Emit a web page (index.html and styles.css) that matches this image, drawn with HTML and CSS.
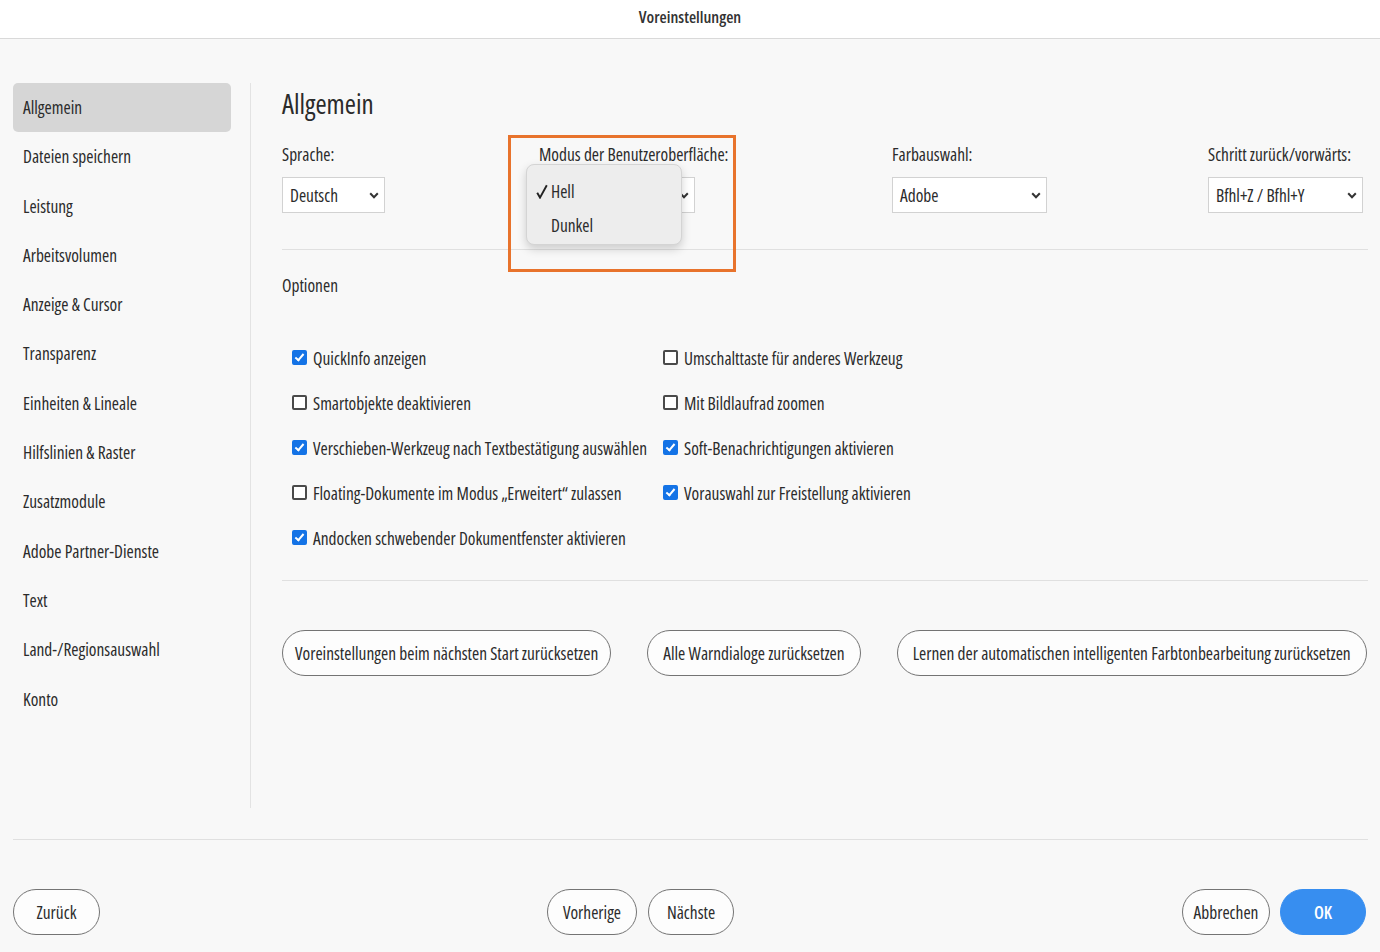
FILE: index.html
```html
<!DOCTYPE html>
<html lang="de">
<head>
  <meta charset="UTF-8">
  <meta name="viewport" content="width=device-width, initial-scale=1.0">
  <title>Voreinstellungen</title>
  <link rel="stylesheet" href="styles.css">
</head>
<body>
  <div class="titlebar">Voreinstellungen</div>

  <div class="layout">
    <!-- Seitenleiste -->
    <nav class="sidebar">
      <div class="nav-item active">Allgemein</div>
      <div class="nav-item">Dateien speichern</div>
      <div class="nav-item">Leistung</div>
      <div class="nav-item">Arbeitsvolumen</div>
      <div class="nav-item">Anzeige &amp; Cursor</div>
      <div class="nav-item">Transparenz</div>
      <div class="nav-item">Einheiten &amp; Lineale</div>
      <div class="nav-item">Hilfslinien &amp; Raster</div>
      <div class="nav-item">Zusatzmodule</div>
      <div class="nav-item">Adobe Partner-Dienste</div>
      <div class="nav-item">Text</div>
      <div class="nav-item">Land-/Regionsauswahl</div>
      <div class="nav-item">Konto</div>
    </nav>

    <!-- Inhalt -->
    <main class="content">
      <h1>Allgemein</h1>

      <div class="fields">
        <div class="field">
          <label>Sprache:</label>
          <div class="select w-small">
            <span>Deutsch</span>
            <svg class="chev" width="10" height="7" viewBox="0 0 10 7"><path d="M1.2 1.2L5 5.2l3.8-4" fill="none" stroke="#333" stroke-width="2"/></svg>
          </div>
        </div>
        <div class="field mode">
          <label>Modus der Benutzeroberfläche:</label>
          <div class="select w-mid">
            <span></span>
            <svg class="chev" width="10" height="7" viewBox="0 0 10 7"><path d="M1.2 1.2L5 5.2l3.8-4" fill="none" stroke="#333" stroke-width="2"/></svg>
          </div>
          <div class="popup">
            <div class="popup-item">
              <svg class="tick" width="12" height="15" viewBox="0 0 12 15"><path d="M1.2 8.8L4 13.6L10.8 1.2" fill="none" stroke="#222" stroke-width="1.9"/></svg>
              Hell
            </div>
            <div class="popup-item">Dunkel</div>
          </div>
          <div class="highlight"></div>
        </div>
        <div class="field">
          <label>Farbauswahl:</label>
          <div class="select w-wide">
            <span>Adobe</span>
            <svg class="chev" width="10" height="7" viewBox="0 0 10 7"><path d="M1.2 1.2L5 5.2l3.8-4" fill="none" stroke="#333" stroke-width="2"/></svg>
          </div>
        </div>
        <div class="field">
          <label>Schritt zurück/vorwärts:</label>
          <div class="select w-wide">
            <span>Bfhl+Z / Bfhl+Y</span>
            <svg class="chev" width="10" height="7" viewBox="0 0 10 7"><path d="M1.2 1.2L5 5.2l3.8-4" fill="none" stroke="#333" stroke-width="2"/></svg>
          </div>
        </div>
      </div>

      <hr class="rule">

      <div class="section-title">Optionen</div>

      <div class="options">
        <div class="option"><span class="box checked"></span>QuickInfo anzeigen</div>
        <div class="option"><span class="box"></span>Umschalttaste für anderes Werkzeug</div>
        <div class="option"><span class="box"></span>Smartobjekte deaktivieren</div>
        <div class="option"><span class="box"></span>Mit Bildlaufrad zoomen</div>
        <div class="option"><span class="box checked"></span>Verschieben-Werkzeug nach Textbestätigung auswählen</div>
        <div class="option"><span class="box checked"></span>Soft-Benachrichtigungen aktivieren</div>
        <div class="option"><span class="box"></span>Floating-Dokumente im Modus „Erweitert“ zulassen</div>
        <div class="option"><span class="box checked"></span>Vorauswahl zur Freistellung aktivieren</div>
        <div class="option"><span class="box checked"></span>Andocken schwebender Dokumentfenster aktivieren</div>
      </div>

      <hr class="rule rule-low">

      <div class="reset-row">
        <button class="pill reset-a">Voreinstellungen beim nächsten Start zurücksetzen</button>
        <button class="pill">Alle Warndialoge zurücksetzen</button>
        <button class="pill">Lernen der automatischen intelligenten Farbtonbearbeitung zurücksetzen</button>
      </div>
    </main>
  </div>

  <hr class="footer-rule">

  <div class="footer">
    <button class="pill small w87">Zurück</button>
    <div class="pager">
      <button class="pill small w90">Vorherige</button>
      <button class="pill small w86">Nächste</button>
    </div>
    <div class="actions">
      <button class="pill small w88">Abbrechen</button>
      <button class="pill small primary w86">OK</button>
    </div>
  </div>
</body>
</html>
```
FILE: styles.css
```css
/* Grundlayout */
body {
  margin: 0;
  height: 952px;
  overflow: hidden;
  background: #f8f8f8;
  color: #2b2b2b;
  font-family: "Open Sans", "Noto Sans", sans-serif;
  font-stretch: 75%;
  font-size: 17.4px;
}

.titlebar {
  height: 38px;
  line-height: 34px;
  background: #fff;
  border-bottom: 1px solid #d9d9d9;
  text-align: center;
  font-size: 16.5px;
  font-weight: 600;
  color: #333;
}

.layout {
  display: flex;
  margin-top: 44px;
  height: 725px;
}

/* Seitenleiste */
.sidebar {
  width: 218px;
  padding-left: 13px;
  padding-right: 19px;
  border-right: 1px solid #e3e3e3;
}

.nav-item {
  height: 49.3px;
  line-height: 49px;
  padding-left: 10px;
  border-radius: 5px;
}

.nav-item.active {
  background: #d6d6d6;
}

/* Inhalt */
.content {
  margin-left: 31px;
  width: 1086px;
}

h1 {
  margin: 0;
  height: 42px;
  line-height: 42px;
  font-size: 27px;
  font-weight: 400;
}

.fields {
  display: grid;
  grid-template-columns: 257px 353px 316px auto;
  margin-top: 17px;
}

.field {
  position: relative;
}

.field label {
  display: block;
  height: 24px;
  line-height: 24px;
}

.select {
  margin-top: 11px;
  height: 34px;
  border: 1px solid #d2d2d2;
  background: #fff;
  display: flex;
  align-items: center;
  justify-content: space-between;
  padding: 0 5px 0 7px;
  box-sizing: content-box;
}

.w-small { width: 89px; }
.w-mid { width: 142px; }
.w-wide { width: 141px; }

/* Aufklappmenü */
.popup {
  position: absolute;
  left: -13px;
  top: 22px;
  width: 156px;
  height: 81px;
  padding-top: 9px;
  box-sizing: border-box;
  background: #ededed;
  border: 1px solid #d4d4d4;
  border-radius: 8px;
  box-shadow: 0 4px 10px rgba(0, 0, 0, 0.18);
}

.popup-item {
  position: relative;
  height: 34px;
  line-height: 34px;
  padding-left: 24px;
  font-weight: 500;
}

.tick {
  position: absolute;
  left: 9px;
  top: 10px;
}

.highlight {
  position: absolute;
  left: -31px;
  top: -7px;
  width: 222px;
  height: 131px;
  border: 3px solid #e8732c;
}

.rule {
  margin: 36px 0 0;
  border: none;
  border-top: 1px solid #e0e0e0;
}

.section-title {
  margin-top: 23px;
  height: 24px;
  line-height: 24px;
}

.options {
  display: grid;
  grid-template-columns: 371px auto;
  margin-top: 38px;
  padding-left: 10px;
}

.option {
  height: 45px;
  display: flex;
  align-items: center;
}

.box {
  width: 11px;
  height: 11px;
  border: 2px solid #4a4a4a;
  border-radius: 2px;
  background: #fff;
  margin-right: 6px;
  position: relative;
}

.box.checked {
  background: #1473e6;
  border-color: #1473e6;
}

.box.checked::after {
  content: "";
  position: absolute;
  left: 3px;
  top: 0px;
  width: 3px;
  height: 7px;
  border: solid #fff;
  border-width: 0 2px 2px 0;
  transform: rotate(40deg);
}

.rule-low {
  margin-top: 20px;
}

.reset-row {
  display: flex;
  gap: 36px;
  margin-top: 49px;
}

/* Buttons */
.pill {
  height: 46px;
  padding: 0 15px;
  border: 1.5px solid #747474;
  border-radius: 23px;
  background: #fdfdfd;
  font: inherit;
  color: #2b2b2b;
  white-space: nowrap;
}

.reset-a {
  padding: 0 12px;
}

.pill.small {
  padding: 0;
}

.w86 { width: 86px; }
.w87 { width: 87px; }
.w88 { width: 88px; }
.w90 { width: 90px; }

.pill.primary {
  background: #378ef0;
  border-color: #378ef0;
  color: #fff;
  font-weight: 600;
}

.footer-rule {
  margin: 31px 12px 0 13px;
  border: none;
  border-top: 1px solid #e0e0e0;
}

.footer {
  display: flex;
  padding: 49px 14px 0 13px;
}

.pager {
  display: flex;
  gap: 11px;
  margin-left: 447px;
}

.actions {
  display: flex;
  gap: 10px;
  margin-left: auto;
}
```
